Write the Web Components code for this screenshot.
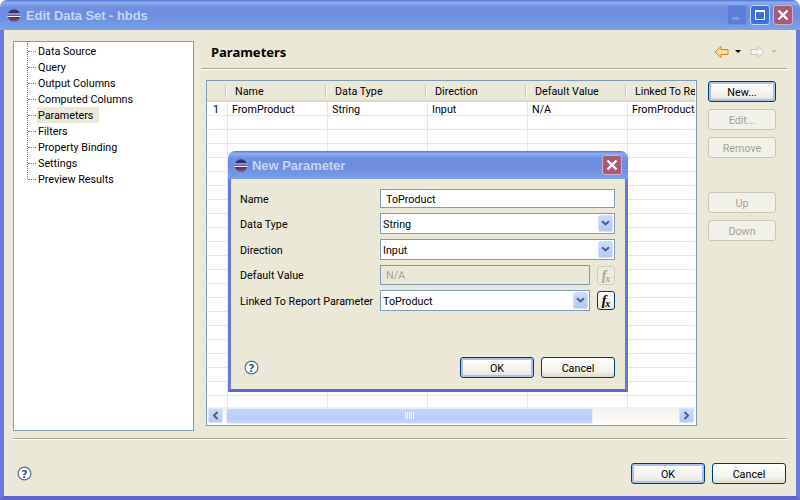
<!DOCTYPE html>
<html><head><meta charset="utf-8">
<style>
html,body{margin:0;padding:0;background:#fff;width:800px;height:500px;overflow:hidden}
body{font:10.75px/14px Roboto,"Noto Sans",sans-serif;color:#000}
</style></head><body>
<x-app></x-app>
<script>
const def=(name,html)=>{customElements.define(name,class extends HTMLElement{
  connectedCallback(){ if(this.shadowRoot) return; const s=this.attachShadow({mode:'open'}); s.innerHTML=typeof html==='function'?html(this):html; }
});};

const ECLIPSE=`<svg width="14" height="13" viewBox="0 0 15 14"><defs><linearGradient id="e" x1="0" y1="0" x2="0" y2="1"><stop offset="0" stop-color="#3a3a86"/><stop offset=".5" stop-color="#2a2a68"/><stop offset="1" stop-color="#8f4f86"/></linearGradient></defs><circle cx="7.5" cy="7" r="6.8" fill="url(#e)"/><path d="M.6 5.4h13.8M.4 8h14.2" stroke="#f2f2fa" stroke-width="1.3" fill="none"/></svg>`;

def('x-titlebar',h=>`<style>
:host{display:flex;align-items:center;height:var(--tb-h,30px);box-sizing:border-box;padding:0 var(--tb-pr,7px) 0 var(--tb-pl,7px);
background:linear-gradient(#5c80d9 0,#5c80d9 1px,#8dadee 2px,#86a6ea 4px,#6f90e0 7px,#6c8cdf 14px,#7296e3 22px,#7ca3ea 100%);
border-radius:7px 7px 0 0;color:#c6d4f6;font:bold 13px/16px "Liberation Sans",sans-serif;letter-spacing:-.05px}
.ic{display:flex;margin-right:var(--tb-gap,5px)}
.t{flex:1;white-space:nowrap;padding-top:2px}
.c{width:20px;height:20px;box-sizing:border-box;border:1px solid #8eaaf0;border-radius:3px;margin-left:3px;display:flex;align-items:center;justify-content:center}
.min{background:#5b7fd8;border-color:#6d8ee2}.max{background:#3f6fdc;border-color:#c4d3f7}.cl{background:#a95a72;border-color:#c9b0cd}
svg{display:block}
</style><span class="ic">${ECLIPSE}</span><span class="t" part="title">${h.getAttribute('text')}</span>
${h.hasAttribute('full')?`<span class="c min"><svg width="14" height="14"><path d="M2 9h7v3H2z" fill="#7c9ae6"/></svg></span><span class="c max"><svg width="14" height="14"><path d="M2.5 3.5h9v8h-9z" fill="none" stroke="#fff"/><path d="M2 2h10v2H2z" fill="#fff"/></svg></span>`:''}
<span class="c cl"><svg width="14" height="14"><path d="M2.5 2.5l9 9M11.5 2.5l-9 9" stroke="#fff" stroke-width="2.4"/></svg></span>`);

def('x-button',h=>`<style>
:host{display:flex;align-items:center;justify-content:center;width:var(--w,68px);height:21px;box-sizing:border-box;border:1px solid #003c74;border-radius:3px;padding-top:2px;
background:linear-gradient(#fff,#f2f1ea 70%,#dfdcd0);color:#000}
:host([disabled]){border-color:#c9c7ba;background:#f2f1e9;color:#a3a293}
:host([primary]){box-shadow:inset 0 0 0 2px #a9c1ee;background:linear-gradient(#fff,#eeede6 80%,#dcd9cc)}
</style><slot></slot>`);

def('x-help',`<style>:host{display:block;width:15px;height:15px}svg{display:block}
text{font:bold 11px "DejaVu Sans",sans-serif;fill:#3d5a8c}</style>
<svg width="15" height="15"><circle cx="7.5" cy="7.5" r="6.4" fill="#fff" stroke="#5d7396" stroke-width="1.2"/><text x="7.5" y="11.5" text-anchor="middle">?</text></svg>`);

def('x-fx',`<style>:host{display:flex;align-items:center;justify-content:center;width:18px;height:19px;box-sizing:border-box;border:1px solid #003c74;border-radius:3px;background:linear-gradient(#fff,#e9e7dc);color:#000;font:italic bold 14px/15px "Liberation Serif",serif}
:host([disabled]){border-color:#cfcdc0;background:#eceadd;color:#a9a899}
sub{font-size:10px;line-height:0;vertical-align:-2px;margin-left:-1px}</style><span>f<sub>x</sub></span>`);

def('x-input',`<style>:host{display:flex;align-items:center;box-sizing:border-box;border:1px solid #7f9db9;background:#fff;padding:2px 0 0 5px;white-space:nowrap}
:host([disabled]){background:#ebe8d8;color:#a6a595}</style><slot></slot>`);

def('x-combo',`<style>:host{display:flex;align-items:center;box-sizing:border-box;border:1px solid #7f9db9;background:#fff;padding:0 1px 0 2px;white-space:nowrap}
.t{flex:1;padding-top:2px}
.b{width:15px;height:17px;box-sizing:border-box;border:1px solid #d4e0fb;border-radius:2px;background:linear-gradient(#cbdbfd,#b5c9f7);display:flex;align-items:center;justify-content:center}
svg{display:block}</style><span class="t"><slot></slot></span>
<span class="b"><svg width="9" height="7"><path d="M1 1.2l3.5 3.3L8 1.2" fill="none" stroke="#4d6185" stroke-width="2"/></svg></span>`);

def('x-tree',h=>{
 const items=['Data Source','Query','Output Columns','Computed Columns','Parameters','Filters','Property Binding','Settings','Preview Results'];
 return `<style>:host{display:block;box-sizing:border-box;border:1px solid #7f9db9;background:#fff;padding-top:1px;padding-left:13px}
 ul{list-style:none;margin:0;padding:0;border-left:1px dotted #808080;height:136px}
 li{height:16px;display:flex;align-items:center;white-space:nowrap}
 li::before{content:"";width:8px;border-top:1px dotted #808080;margin-right:1px;flex:none}
 span{padding:1px 1px 0;height:15px;line-height:16px}
 .sel{background:#ebe8d8;padding-right:6px}
 </style><ul>${items.map(t=>`<li><span class="${t==='Parameters'?'sel':''}">${t}</span></li>`).join('')}</ul>`;
});

def('x-scrollbar',`<style>:host{display:flex;align-items:center;height:17px;box-sizing:border-box;padding:0 1px;background:linear-gradient(#f3f1ec,#fcfcfa)}
.b{width:15px;height:15px;box-sizing:border-box;border:1px solid #d9e3fb;border-radius:2px;background:linear-gradient(#cbdbfd,#b5c9f7);display:flex;align-items:center;justify-content:center;flex:none}
.th{margin-left:3px;width:367px;height:16px;box-sizing:border-box;border:1px solid #e3ebfc;border-radius:2px;background:linear-gradient(#c3d5fa,#b9cdf8 70%,#c7d8fb);display:flex;align-items:center;justify-content:center}
.sp{flex:1}
svg{display:block}</style>
<span class="b"><svg width="7" height="9"><path d="M5.5 1L2 4.5 5.5 8" fill="none" stroke="#4d6185" stroke-width="2"/></svg></span>
<span class="th"><svg width="9" height="7"><path d="M.5 0v7M2.5 0v7M4.5 0v7M6.5 0v7M8.5 0v7" stroke="#f0f5ff"/></svg></span>
<span class="sp"></span>
<span class="b"><svg width="7" height="9"><path d="M1.5 1L5 4.5 1.5 8" fill="none" stroke="#4d6185" stroke-width="2"/></svg></span>`);

def('x-table',h=>{
 const cols=['Name','Data Type','Direction','Default Value','Linked To Re'];
 const first=['FromProduct','String','Input','N/A','FromProduct'];
 let rows=`<div class="r"><span class="n">1</span>${first.map(t=>`<span class="c">${t}</span>`).join('')}</div>`;
 for(let i=0;i<21;i++) rows+=`<div class="r"><span class="n"></span>${first.map(()=>`<span class="c"></span>`).join('')}</div>`;
 return `<style>:host{display:flex;flex-direction:column;box-sizing:border-box;border:1px solid #7f9db9;background:#fff;overflow:hidden;padding:0 1px 1px 0}
 .hd{display:flex;height:21px;box-sizing:border-box;background:#ebe8d8;border-bottom:2px solid #dbd8c8;flex:none;overflow:hidden}
 .hd span{flex:none;width:100px;box-sizing:border-box;padding-left:10px;line-height:21px;white-space:nowrap;position:relative;overflow:hidden}
 .hd span::before{content:"";position:absolute;left:0;top:4px;height:12px;border-left:1px solid #c7c5b2;border-right:1px solid #fff}
 .hd .n{width:18px;padding:0}.hd .n::before{display:none}
 .hd span:last-child{width:70px}
 .bd{flex:1;overflow:hidden;min-height:0}
 .r{display:flex;height:14px;box-sizing:border-box;border-bottom:1px solid #ebe8d8;white-space:nowrap}
 .r span{flex:none;width:100px;box-sizing:border-box;border-right:1px solid #ebe8d8;padding-left:4px;line-height:15px;overflow:hidden}
 .r .n{width:21px;padding-left:6px}
 x-scrollbar{flex:none}
 </style><div class="hd"><span class="n"></span>${cols.map(c=>`<span>${c}</span>`).join('')}</div>
 <div class="bd">${rows}</div><x-scrollbar></x-scrollbar>`;
});

def('x-nav',`<style>:host{display:flex;align-items:center}svg{display:block}</style>
<svg width="64" height="14" viewBox="0 0 64 14">
<path d="M1 7L7 1.5V4.5H14V9.5H7V12.5Z" fill="#fbdc95" stroke="#c98a1c" stroke-linejoin="round"/>
<path d="M21 5h6l-3 3z" fill="#000"/>
<path d="M50 7L44 1.5V4.5H37V9.5H44V12.5Z" fill="#f4f3ef" stroke="#c5c5bd" stroke-linejoin="round"/>
<path d="M57 5h6l-3 3z" fill="#c2c1b6"/></svg>`);

def('x-window',h=>`<style>
:host{display:flex;flex-direction:column;box-sizing:border-box}
.b{flex:1;min-height:0;display:flex;background:#ebe8d8;border:solid #6a78dc;border-width:0 var(--bw,4px) var(--bw,4px);border-bottom-color:#5e66d2}
::slotted(*){flex:1;min-width:0}
</style><x-titlebar text="${h.getAttribute('text')}" ${h.hasAttribute('full')?'full':''}></x-titlebar><div class="b"><slot></slot></div>`);

def('x-app',`<style>
:host{display:block;position:relative;width:800px;height:500px}
.win{width:800px;height:500px}
.m{display:flex;flex-direction:column;padding:11px 9px 0}
.top{display:flex;height:390px}
x-tree{width:181px;height:390px;flex:none}
.right{margin-left:7px;width:586px;flex:none}
.hdr{display:flex;align-items:flex-start;justify-content:space-between;height:23px;padding-top:4px;border-bottom:1px solid #aca899;box-shadow:0 1px 0 #fff;padding-left:10px;padding-right:9px}
h2{margin:0;font:bold 13px/14px "Noto Sans","Liberation Sans",sans-serif}
.pane{display:flex;margin-top:11px;padding-left:5px}
x-table{width:491px;height:346px;flex:none}
.btns{margin-left:11px;padding-top:1px;display:flex;flex-direction:column;gap:7px}
.btns .gap{height:20px}
.sep{margin-top:7px;border-top:1px solid #aca899;border-bottom:1px solid #fff}
.ft{display:flex;align-items:flex-start;padding:23px 1px 0 4px}
.ft x-help{margin-right:auto;margin-top:3px}
.ft x-button{--w:74px}.ft x-button+x-button{margin-left:7px}
.dlg{position:absolute;left:228px;top:151px;width:400px;height:241px;--bw:3px;--tb-h:28px;--tb-pl:6px;--tb-pr:6px;--tb-gap:4px}
.dm{display:flex;flex-direction:column;padding:10px 10px 0 9px}
.g{display:grid;grid-template-columns:140px 1fr 18px;grid-template-rows:19px 21px 21px 20px 21px;row-gap:5px;align-items:center;white-space:nowrap}
.g>span{padding-top:2px}
.g x-input,.g x-combo{height:100%}
.w{grid-column:2/4}
.g x-fx{justify-self:end}
.g .f{margin-right:7px}
.df{display:flex;align-items:center;margin-top:46px;padding-left:4px}
.df x-help{margin-right:auto}
.df x-button{--w:74px}.df x-button+x-button{margin-left:7px}
</style>
<x-window class="win" text="Edit Data Set - hbds" full>
 <div class="m">
  <div class="top">
   <x-tree></x-tree>
   <div class="right">
    <div class="hdr"><h2>Parameters</h2><x-nav></x-nav></div>
    <div class="pane">
     <x-table></x-table>
     <div class="btns">
      <x-button primary>New...</x-button>
      <x-button disabled>Edit...</x-button>
      <x-button disabled>Remove</x-button>
      <div class="gap"></div>
      <x-button disabled>Up</x-button>
      <x-button disabled>Down</x-button>
     </div>
    </div>
   </div>
  </div>
  <div class="sep"></div>
  <div class="ft"><x-help></x-help><x-button primary>OK</x-button><x-button>Cancel</x-button></div>
 </div>
</x-window>
<x-window class="dlg" text="New Parameter">
 <div class="dm">
  <div class="g">
   <span>Name</span><x-input class="w">ToProduct</x-input>
   <span>Data Type</span><x-combo class="w">String</x-combo>
   <span>Direction</span><x-combo class="w">Input</x-combo>
   <span>Default Value</span><x-input class="f" disabled>N/A</x-input><x-fx disabled></x-fx>
   <span>Linked To Report Parameter</span><x-combo class="f">ToProduct</x-combo><x-fx></x-fx>
  </div>
  <div class="df"><x-help></x-help><x-button primary>OK</x-button><x-button>Cancel</x-button></div>
 </div>
</x-window>`);
</script>
</body></html>
